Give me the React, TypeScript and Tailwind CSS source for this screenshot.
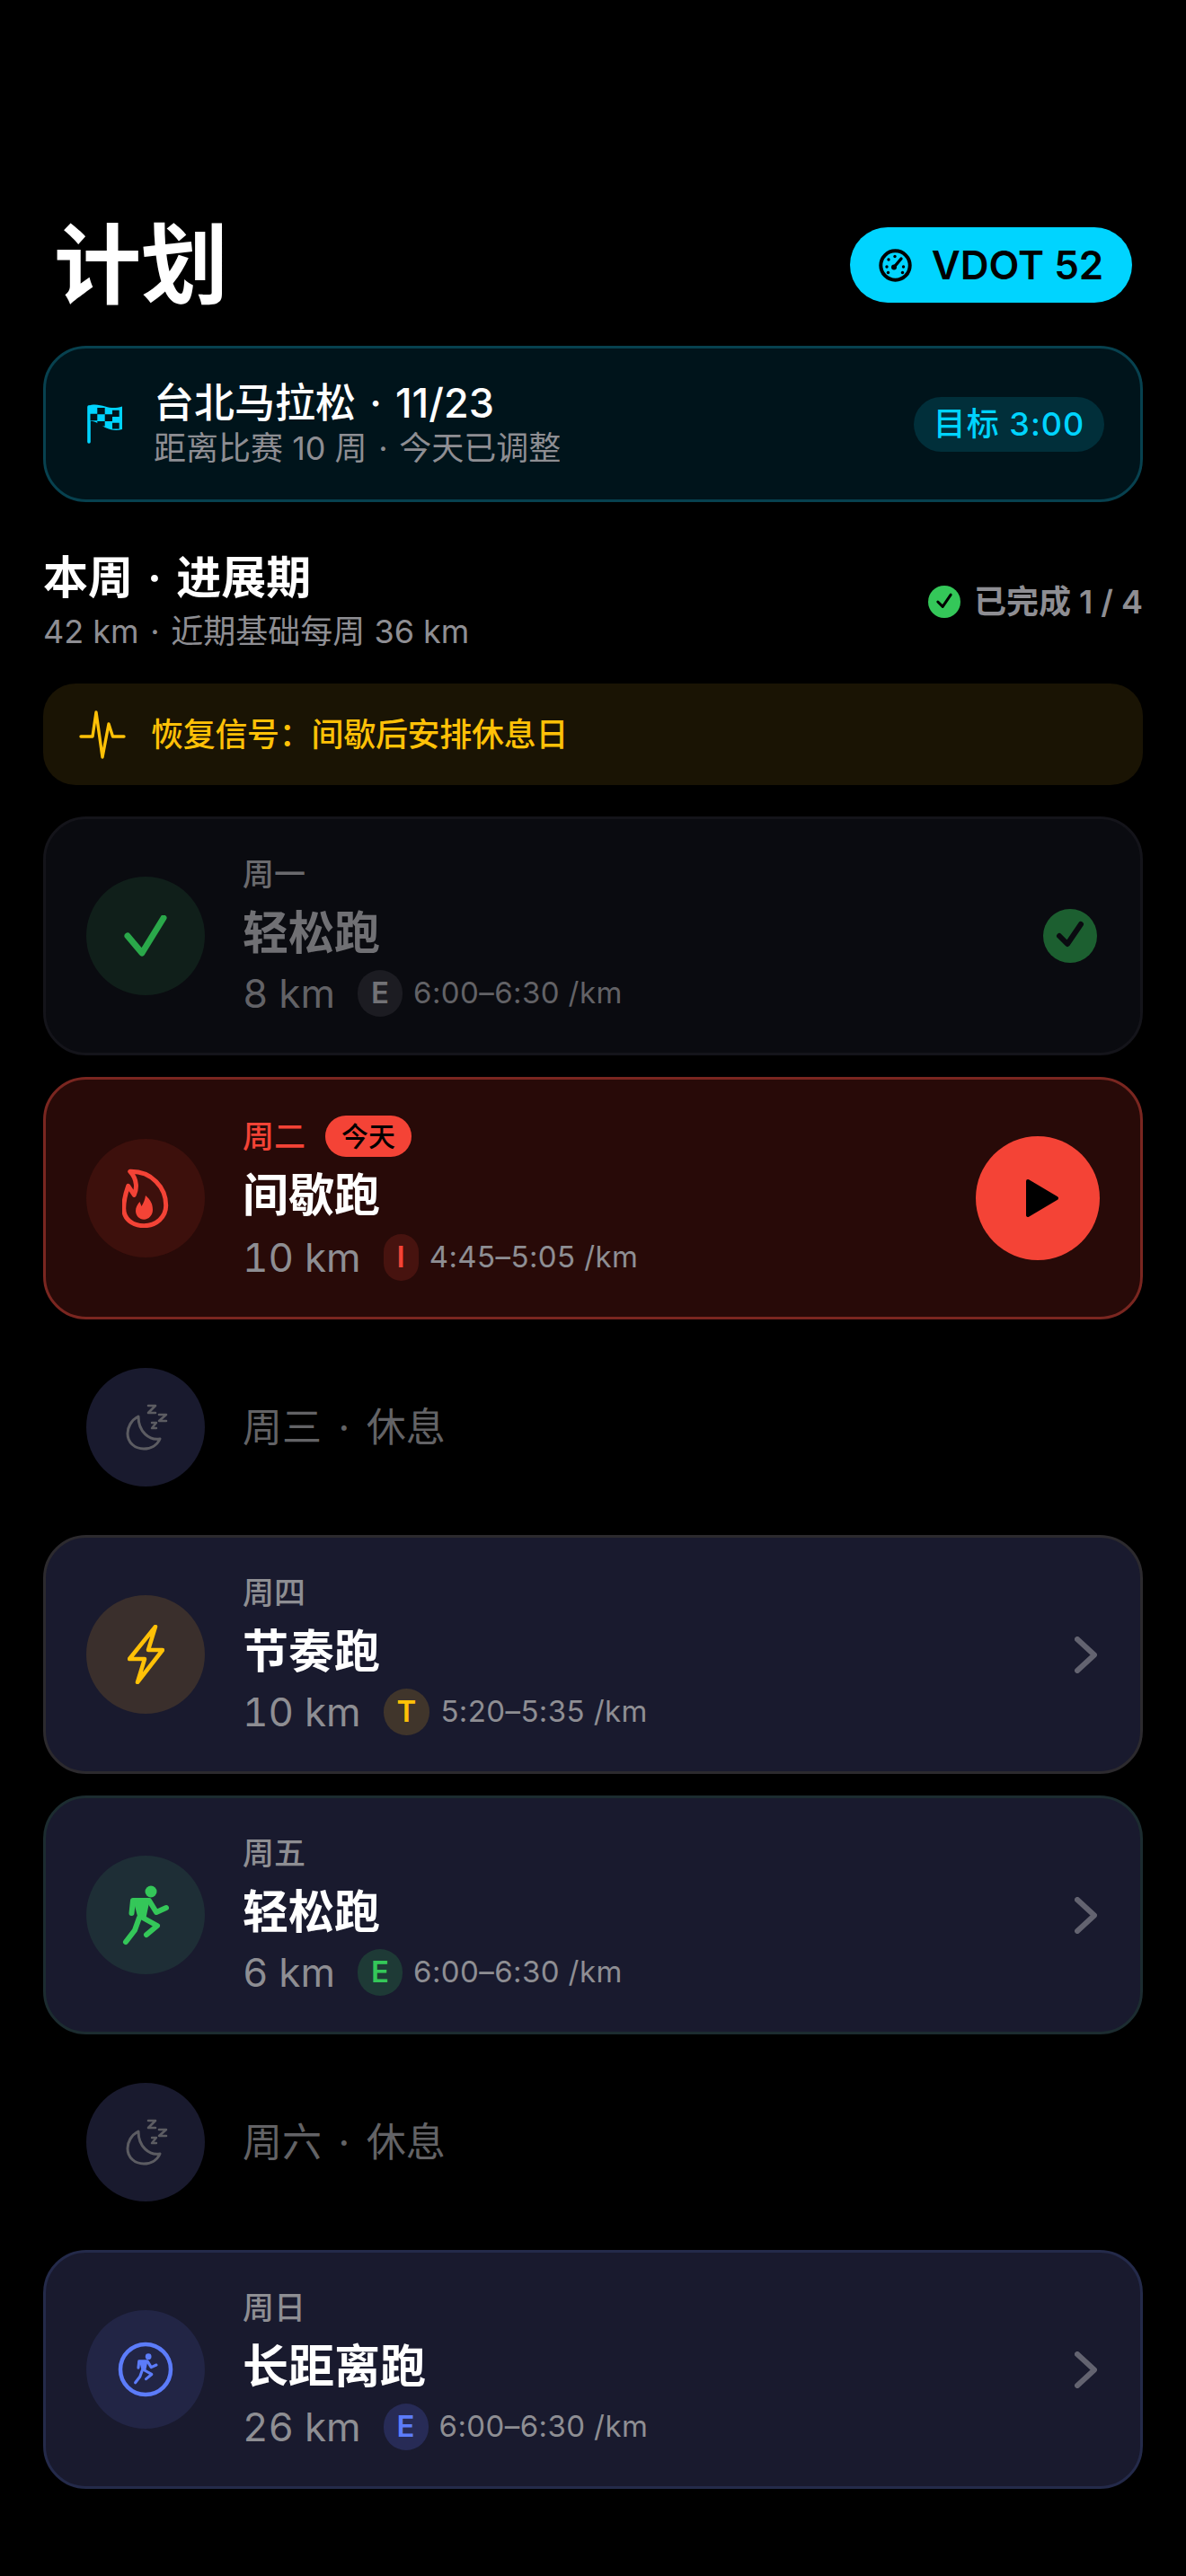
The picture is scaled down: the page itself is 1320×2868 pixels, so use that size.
import type { ReactNode } from 'react'

const FONT = "font-['Inter','Noto_Sans_CJK_SC',sans-serif]"

function Dot({ narrow }: { narrow?: boolean }) {
  return <span className={narrow ? 'mx-[0.07em]' : 'mx-[0.14em]'}>·</span>
}

function Gauge() {
  return (
    <svg width="37" height="37" viewBox="0 0 37 37" fill="none">
      <circle cx="18.5" cy="18.5" r="16.2" stroke="#000" strokeWidth="4" />
      <path d="M17 20.5 L25 11" stroke="#000" strokeWidth="3.4" strokeLinecap="round" />
      <circle cx="17" cy="20.5" r="3" fill="#000" />
      {[[9, 20], [11, 12], [18, 8.5], [27.5, 20], [10.5, 26.5], [26.5, 26.5]].map(([x, y]) => (
        <circle key={`${x}-${y}`} cx={x} cy={y} r="1.7" fill="#000" />
      ))}
    </svg>
  )
}

function Flag() {
  return (
    <svg width="40" height="44" viewBox="0 0 40 44" fill="none" className="shrink-0">
      <path d="M2 42 V3" stroke="#00d4ff" strokeWidth="3.6" strokeLinecap="round" />
      <path d="M1 2 C8 -1 14 1 20 2.5 C27 4.5 32 4.5 39 2.5 V28 C32 30 27 29 20 26 C14 23 8 18 3 19 Z" fill="#00d4ff" />
      <path d="M11.3 4 H19.7 V11.3 H11.3 Z M28 6.7 H35.7 V14 H28 Z M3.5 10.7 H11.3 V18.3 H3.5 Z M19.7 11.3 H28 V19 H19.7 Z M11.3 19 H19.7 V24.5 H11.3 Z M28 20.7 H35.7 V27.5 H28 Z" fill="#00141b" />
    </svg>
  )
}

function Pulse() {
  return (
    <svg width="52" height="54" viewBox="0 0 52 54" fill="none" className="shrink-0">
      <path d="M2 29 H15 L19 2 L26 52 L33 15 L37.5 29 H50" stroke="#ffc107" strokeWidth="3.4" strokeLinecap="round" strokeLinejoin="round" />
    </svg>
  )
}

function SmallCheck({ size, bg, stroke, width }: { size: number; bg: string; stroke: string; width: number }) {
  return (
    <svg width={size} height={size} viewBox="0 0 60 60" className="shrink-0">
      <circle cx="30" cy="30" r="30" fill={bg} />
      <path d="M18 30 L27 39 L42 17" fill="none" stroke={stroke} strokeWidth={width} strokeLinecap="round" strokeLinejoin="round" />
    </svg>
  )
}

function CheckIcon() {
  return (
    <svg width="48" height="46" viewBox="0 0 48 46" fill="none">
      <path d="M4 23 L20 42 L44 3" stroke="#2aa84a" strokeWidth="7" strokeLinecap="round" strokeLinejoin="round" />
    </svg>
  )
}

function Flame() {
  return (
    <svg width="52" height="66" viewBox="0 0 52 66" fill="none">
      <path
        d="M8.7 3.3 C32.7 2.7 48.7 21 48.7 41 C48.7 54.3 37.7 63.7 24.3 63.7 C11 63.7 1.7 56 1.7 44.3 C1.7 34.3 4.3 26 6.7 19.3 L13.3 29.3 C16 24 17.7 12.7 8.7 3.3 Z"
        stroke="#f44336"
        strokeWidth="5"
        strokeLinejoin="round"
      />
      <path d="M26 30 C32 35 34 40 34 46 C34 52 29.5 56.7 24.3 56.7 C19 56.7 15 52.5 15 47 C15 43 17 40 19.5 37 L21.5 42 C24 38 25.5 34 26 30 Z" fill="#f44336" />
    </svg>
  )
}

function Bolt() {
  return (
    <svg width="41" height="66" viewBox="0 0 41 66" fill="none">
      <path d="M31 2 L2 38 H19 L11 64 L39 28 H23 Z" stroke="#ffc107" strokeWidth="4.5" strokeLinejoin="round" />
    </svg>
  )
}

function RunnerShape({ color }: { color: string }) {
  return (
    <g stroke={color} strokeWidth="6" strokeLinecap="round" strokeLinejoin="round" fill="none">
      <circle cx="33" cy="9" r="6.5" fill={color} stroke="none" />
      <path d="M11.5 33 L13 19 H31 L39 32 L50 27" />
      <path d="M15 19 H30 L26 38 H20 Z" fill={color} strokeWidth="3" />
      <path d="M20 38 L15 52 L5 65" />
      <path d="M22 37 L40 47 L28 57" />
    </g>
  )
}

function Runner() {
  return (
    <svg width="54" height="70" viewBox="0 0 54 70">
      <RunnerShape color="#34c759" />
    </svg>
  )
}

function RunnerRing() {
  return (
    <svg width="62" height="62" viewBox="0 0 62 62" fill="none">
      <circle cx="31" cy="31" r="28" stroke="#5c7cfa" strokeWidth="4.5" />
      <g transform="translate(17 12) scale(0.52)">
        <RunnerShape color="#5c7cfa" />
      </g>
    </svg>
  )
}

function Moon() {
  return (
    <svg width="48" height="54" viewBox="0 0 48 54" fill="none" stroke="#5c5c62" strokeLinecap="round" strokeLinejoin="round" className="ml-[3px]">
      <path d="M14 15 C6 19 2 27 2 34 C2 44 10 51 20 51 C28 51 35 47 38 40 C26 42 14 32 14 15 Z" strokeWidth="3" />
      <path d="M25 3 H33 L25 11 H33" strokeWidth="2.6" />
      <path d="M37 13 H45 L37 20 H45" strokeWidth="2.6" />
      <path d="M29 22 H34 L29 28 H34" strokeWidth="2.4" />
    </svg>
  )
}

function Play() {
  return (
    <svg width="38" height="44" viewBox="0 0 38 44">
      <path d="M3 3 L35 22 L3 41 Z" fill="#000" stroke="#000" strokeWidth="4" strokeLinejoin="round" />
    </svg>
  )
}

function Chevron() {
  return (
    <svg width="25" height="41" viewBox="0 0 25 41" fill="none" className="shrink-0">
      <path d="M3 3 L22 20.5 L3 38" stroke="#636370" strokeWidth="6" strokeLinecap="round" strokeLinejoin="round" />
    </svg>
  )
}

function IconCircle({ className, children }: { className: string; children: ReactNode }) {
  return <div className={`flex h-[132px] w-[132px] shrink-0 items-center justify-center rounded-full ${className}`}>{children}</div>
}

interface Workout {
  day: string
  title: string
  km: string
  zone: string
  pace: string
  card: string
  iconBg: string
  badge: string
  icon: ReactNode
  titleColor?: string
  dayColor?: string
  kmColor?: string
  paceColor?: string
  right: ReactNode
  today?: boolean
}

function WorkoutCard({ w }: { w: Workout }) {
  return (
    <div className={`flex items-center rounded-[48px] border-[3px] pl-[45px] ${w.today ? 'h-[270px] pr-[45px]' : 'h-[266px] pr-[48px]'} ${w.card}`}>
      <IconCircle className={w.iconBg}>{w.icon}</IconCircle>
      <div className="ml-[42px] flex flex-1 flex-col">
        <div className={`flex h-[46px] gap-[22px] ${w.today ? 'items-center' : 'items-start'}`}>
          <span className={`text-[35px] leading-[40px] font-medium ${w.dayColor ?? 'text-[#8e8e93]'}`}>{w.day}</span>
          {w.today && (
            <span className="flex h-[46px] w-[96px] items-center justify-center rounded-full bg-[#f44336] text-[30px] font-medium text-black">今天</span>
          )}
        </div>
        <div className={`${w.today ? 'mt-[13px]' : 'mt-[10px]'} text-[51px] leading-[60px] font-semibold ${w.titleColor ?? 'text-white'}`}>{w.title}</div>
        <div className={`${w.today ? 'mt-[13px]' : 'mt-[11px]'} flex h-[52px] items-center`}>
          <span className={`text-[44px] leading-[52px] tabular-nums ${w.kmColor ?? 'text-[#8e8e93]'}`}>{w.km}</span>
          <span className={`ml-[25px] flex h-[52px] items-center justify-center rounded-full px-[15px] text-[33px] font-semibold ${w.badge}`}>{w.zone}</span>
          <span className={`ml-[12px] text-[33px] tracking-[0.4px] ${w.paceColor ?? 'text-[#8e8e93]'}`}>{w.pace}</span>
        </div>
      </div>
      {w.right}
    </div>
  )
}

function RestRow({ day }: { day: string }) {
  return (
    <div className="flex h-[192px] items-center pl-[48px]">
      <IconCircle className="bg-[#191a2e]">
        <Moon />
      </IconCircle>
      <span className="ml-[42px] text-[44px] text-[#636366]">
        {day} <Dot /> 休息
      </span>
    </div>
  )
}

export default function App() {
  return (
    <div className={`h-[2868px] overflow-hidden bg-black pt-[253px] ${FONT}`}>
      <div className="flex h-[84px] items-center justify-between px-[60px]">
        <h1 className="text-[97px] leading-[84px] font-bold text-white">计划</h1>
        <div className="flex h-[84px] w-[314px] items-center justify-center gap-[22px] rounded-full bg-[#00d4ff] text-[44px] font-semibold text-black">
          <Gauge />
          <span>VDOT 52</span>
        </div>
      </div>

      <div className="mx-[48px]">
        <div className="mt-[48px] flex h-[174px] items-center rounded-[48px] border-[3px] border-[#07414f] bg-[#00141b] pr-[40px] pl-[46px]">
          <Flag />
          <div className="ml-[34px] flex-1">
            <div className="text-[45px] leading-[52px] font-medium text-white">
              台北马拉松 <Dot narrow /> 11/23
            </div>
            <div className="mt-[2px] text-[36px] leading-[44px] text-[#8e8e93]">
              距离比赛 10 周 <Dot narrow /> 今天已调整
            </div>
          </div>
          <div className="flex h-[61px] w-[212px] items-center justify-center rounded-full bg-[#012f3a] text-[36px] font-medium tracking-[1px] text-[#00d4ff]">目标 3:00</div>
        </div>

        <div className="mt-[56px] flex items-center justify-between">
          <div>
            <div className="text-[50px] leading-[56px] font-semibold text-white">
              本周 <Dot narrow /> 进展期
            </div>
            <div className="mt-[10px] text-[36px] leading-[44px] text-[#8e8e93]">
              42 km <Dot narrow /> 近期基础每周 36 km
            </div>
          </div>
          <div className="flex items-center gap-[15px] text-[36px] font-semibold text-[#8e8e93]">
            <SmallCheck size={36} bg="#34c759" stroke="#000" width={5} />
            <span>已完成 1 / 4</span>
          </div>
        </div>

        <div className="mt-[36px] flex h-[113px] items-center gap-[28px] rounded-[36px] bg-[#1a1404] pl-[40px]">
          <Pulse />
          <span className="text-[36px] font-medium tracking-[-0.3px] text-[#ffc107]">恢复信号：间歇后安排休息日</span>
        </div>

        <div className="mt-[35px] flex flex-col gap-[24px]">
          <WorkoutCard
            w={{
              day: '周一',
              title: '轻松跑',
              km: '8 km',
              zone: 'E',
              pace: '6:00–6:30 /km',
              card: 'border-[#14141a] bg-[#0a0b10]',
              iconBg: 'bg-[#101f1a]',
              badge: 'bg-[#1c1c22] text-[#727276]',
              icon: <CheckIcon />,
              titleColor: 'text-[#707074]',
              dayColor: 'text-[#6a6a6e]',
              kmColor: 'text-[#626266]',
              paceColor: 'text-[#626266]',
              right: <SmallCheck size={60} bg="#1c5f30" stroke="#0a0b10" width={6} />,
            }}
          />
          <WorkoutCard
            w={{
              day: '周二',
              title: '间歇跑',
              km: '10 km',
              zone: 'I',
              pace: '4:45–5:05 /km',
              card: 'border-[#7a2620] bg-[#280a08]',
              iconBg: 'bg-[#3d100c]',
              badge: 'bg-[#47130f] text-[#f44336]',
              icon: <Flame />,
              dayColor: 'text-[#f44336]',
              today: true,
              right: (
                <div className="flex h-[138px] w-[138px] shrink-0 items-center justify-center rounded-full bg-[#f44336] pl-[10px]">
                  <Play />
                </div>
              ),
            }}
          />
          <RestRow day="周三" />
          <WorkoutCard
            w={{
              day: '周四',
              title: '节奏跑',
              km: '10 km',
              zone: 'T',
              pace: '5:20–5:35 /km',
              card: 'border-[#2c2a2e] bg-[#191a2e]',
              iconBg: 'bg-[#3a2f2c]',
              badge: 'bg-[#40352b] text-[#ffc107]',
              icon: <Bolt />,
              right: <Chevron />,
            }}
          />
          <WorkoutCard
            w={{
              day: '周五',
              title: '轻松跑',
              km: '6 km',
              zone: 'E',
              pace: '6:00–6:30 /km',
              card: 'border-[#1c2c30] bg-[#191a2e]',
              iconBg: 'bg-[#1e2e36]',
              badge: 'bg-[#1e3a36] text-[#34c759]',
              icon: <Runner />,
              right: <Chevron />,
            }}
          />
          <RestRow day="周六" />
          <WorkoutCard
            w={{
              day: '周日',
              title: '长距离跑',
              km: '26 km',
              zone: 'E',
              pace: '6:00–6:30 /km',
              card: 'border-[#242a4a] bg-[#191a2e]',
              iconBg: 'bg-[#222545]',
              badge: 'bg-[#272b56] text-[#5c7cfa]',
              icon: <RunnerRing />,
              right: <Chevron />,
            }}
          />
        </div>
      </div>
    </div>
  )
}
